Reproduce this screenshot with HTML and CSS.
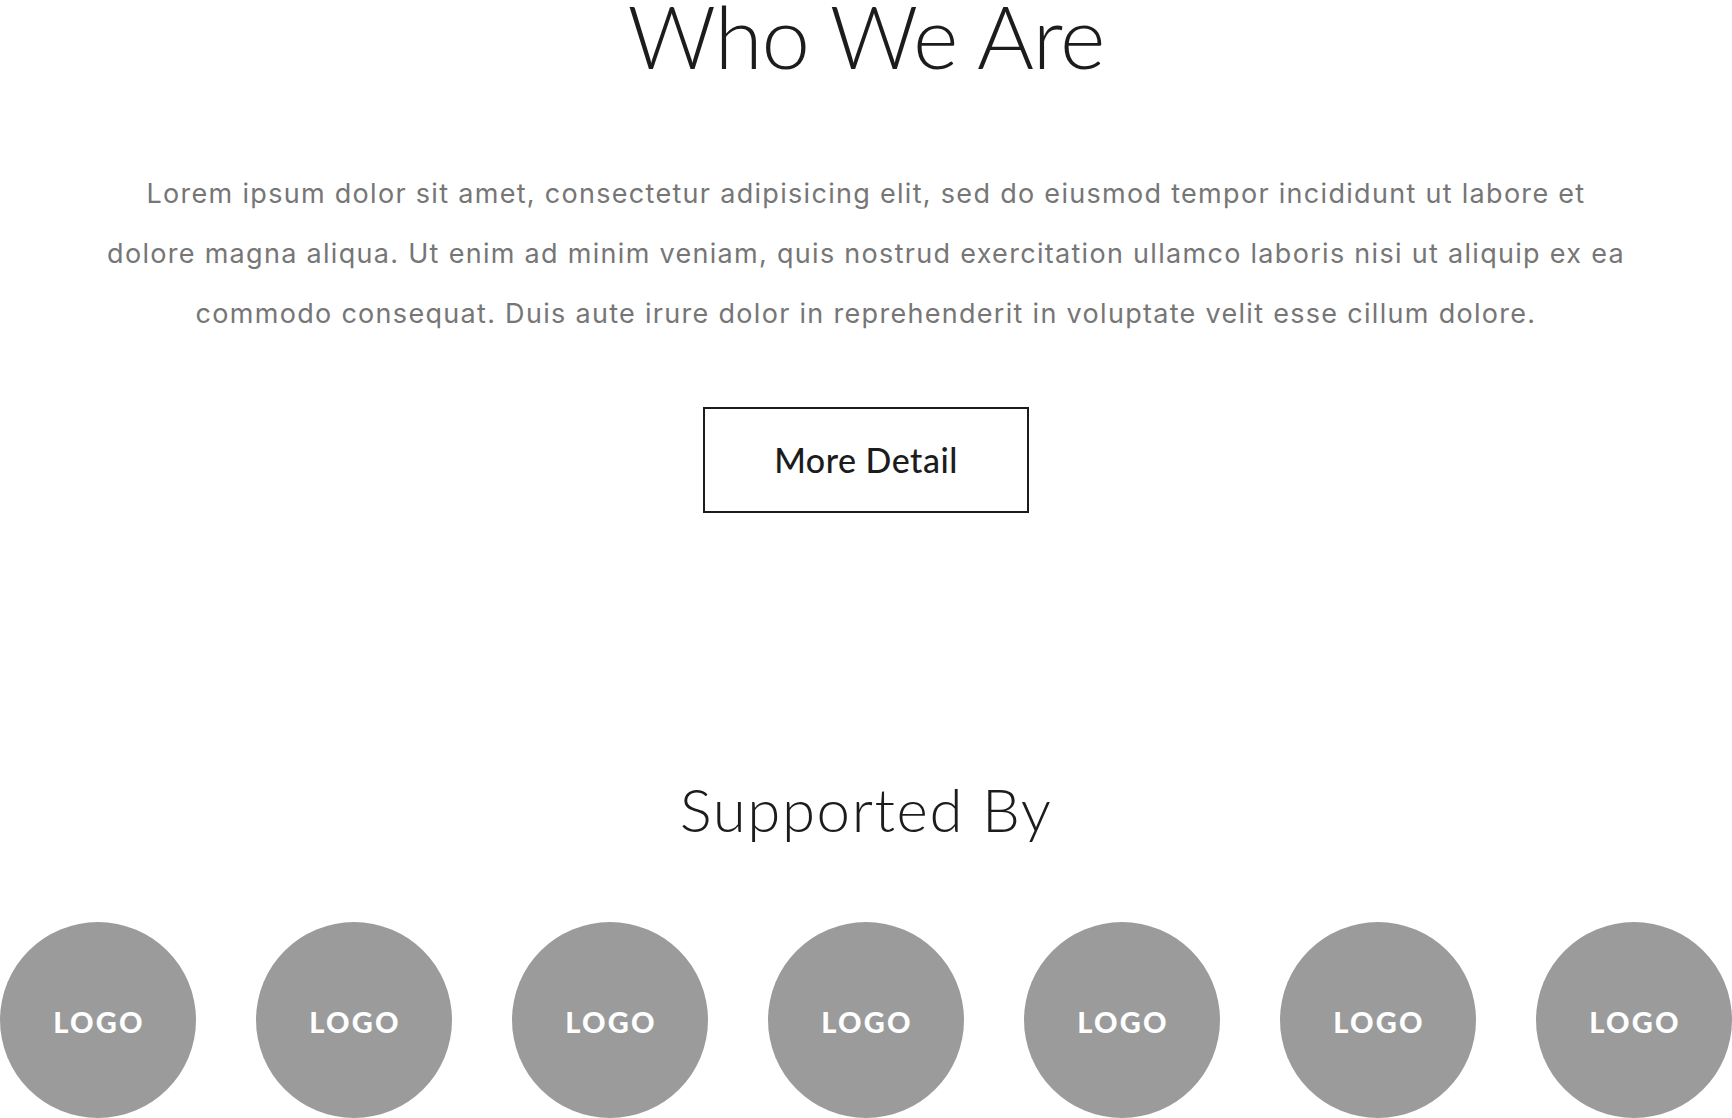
FILE: index.html
```html
<!DOCTYPE html>
<html lang="en">
<head>
<meta charset="utf-8">
<title>Who We Are</title>
<link rel="stylesheet" href="styles.css">
</head>
<body>
<main class="page">
  <section class="about">
    <h1 class="about-title">Who We Are</h1>
    <p class="about-text">Lorem ipsum dolor sit amet, consectetur adipisicing elit, sed do eiusmod tempor incididunt ut labore et<br>dolore magna aliqua. Ut enim ad minim veniam, quis nostrud exercitation ullamco laboris nisi ut aliquip ex ea<br>commodo consequat. Duis aute irure dolor in reprehenderit in voluptate velit esse cillum dolore.</p>
    <a class="btn-outline" href="#">More Detail</a>
  </section>
  <section class="supporters">
    <h2 class="supporters-title">Supported By</h2>
    <ul class="logo-row">
      <li class="logo-circle">LOGO</li>
      <li class="logo-circle">LOGO</li>
      <li class="logo-circle">LOGO</li>
      <li class="logo-circle">LOGO</li>
      <li class="logo-circle">LOGO</li>
      <li class="logo-circle">LOGO</li>
      <li class="logo-circle">LOGO</li>
    </ul>
  </section>
</main>
</body>
</html>
```

FILE: styles.css
```css
* { box-sizing: border-box; }

html, body {
  margin: 0;
  padding: 0;
  background: #ffffff;
}

body {
  font-family: "Lato", "Liberation Sans", sans-serif;
  color: #1c1c1c;
  overflow: hidden;
}

.page {
  width: 1732px;
}

.about {
  display: flex;
  flex-direction: column;
  align-items: center;
  text-align: center;
}

.about-title {
  margin: 0;
  font-size: 87px;
  line-height: 72px;
  font-weight: 300;
  letter-spacing: -1px;
  color: #1c1c1c;
}

.about-text {
  margin: 92px 0 0;
  font-family: "Inter", "Lato", sans-serif;
  font-size: 27px;
  line-height: 60px;
  letter-spacing: 1.3px;
  color: #767676;
  font-weight: 400;
}

.btn-outline {
  margin-top: 63px;
  display: flex;
  align-items: center;
  justify-content: center;
  width: 326px;
  height: 106px;
  border: 2px solid #1c1c1c;
  font-size: 34px;
  font-weight: 500;
  letter-spacing: 0.5px;
  color: #1c1c1c;
  text-decoration: none;
  padding-bottom: 2px;
}

.supporters {
  display: flex;
  flex-direction: column;
  align-items: center;
}

.supporters-title {
  margin: 260px 0 0;
  font-size: 60px;
  line-height: 72px;
  font-weight: 300;
  letter-spacing: 1.6px;
  color: #1c1c1c;
}

.logo-row {
  list-style: none;
  margin: 77px 0 0;
  padding: 0;
  width: 100%;
  display: flex;
  justify-content: space-between;
}

.logo-circle {
  width: 196px;
  height: 196px;
  border-radius: 50%;
  background: #9b9b9b;
  display: flex;
  align-items: center;
  justify-content: center;
  padding-top: 2px;
  padding-left: 2px;
  color: #ffffff;
  font-family: "Lato", "Liberation Sans", sans-serif;
  font-weight: 900;
  font-size: 29px;
  letter-spacing: 2.2px;
}
```
